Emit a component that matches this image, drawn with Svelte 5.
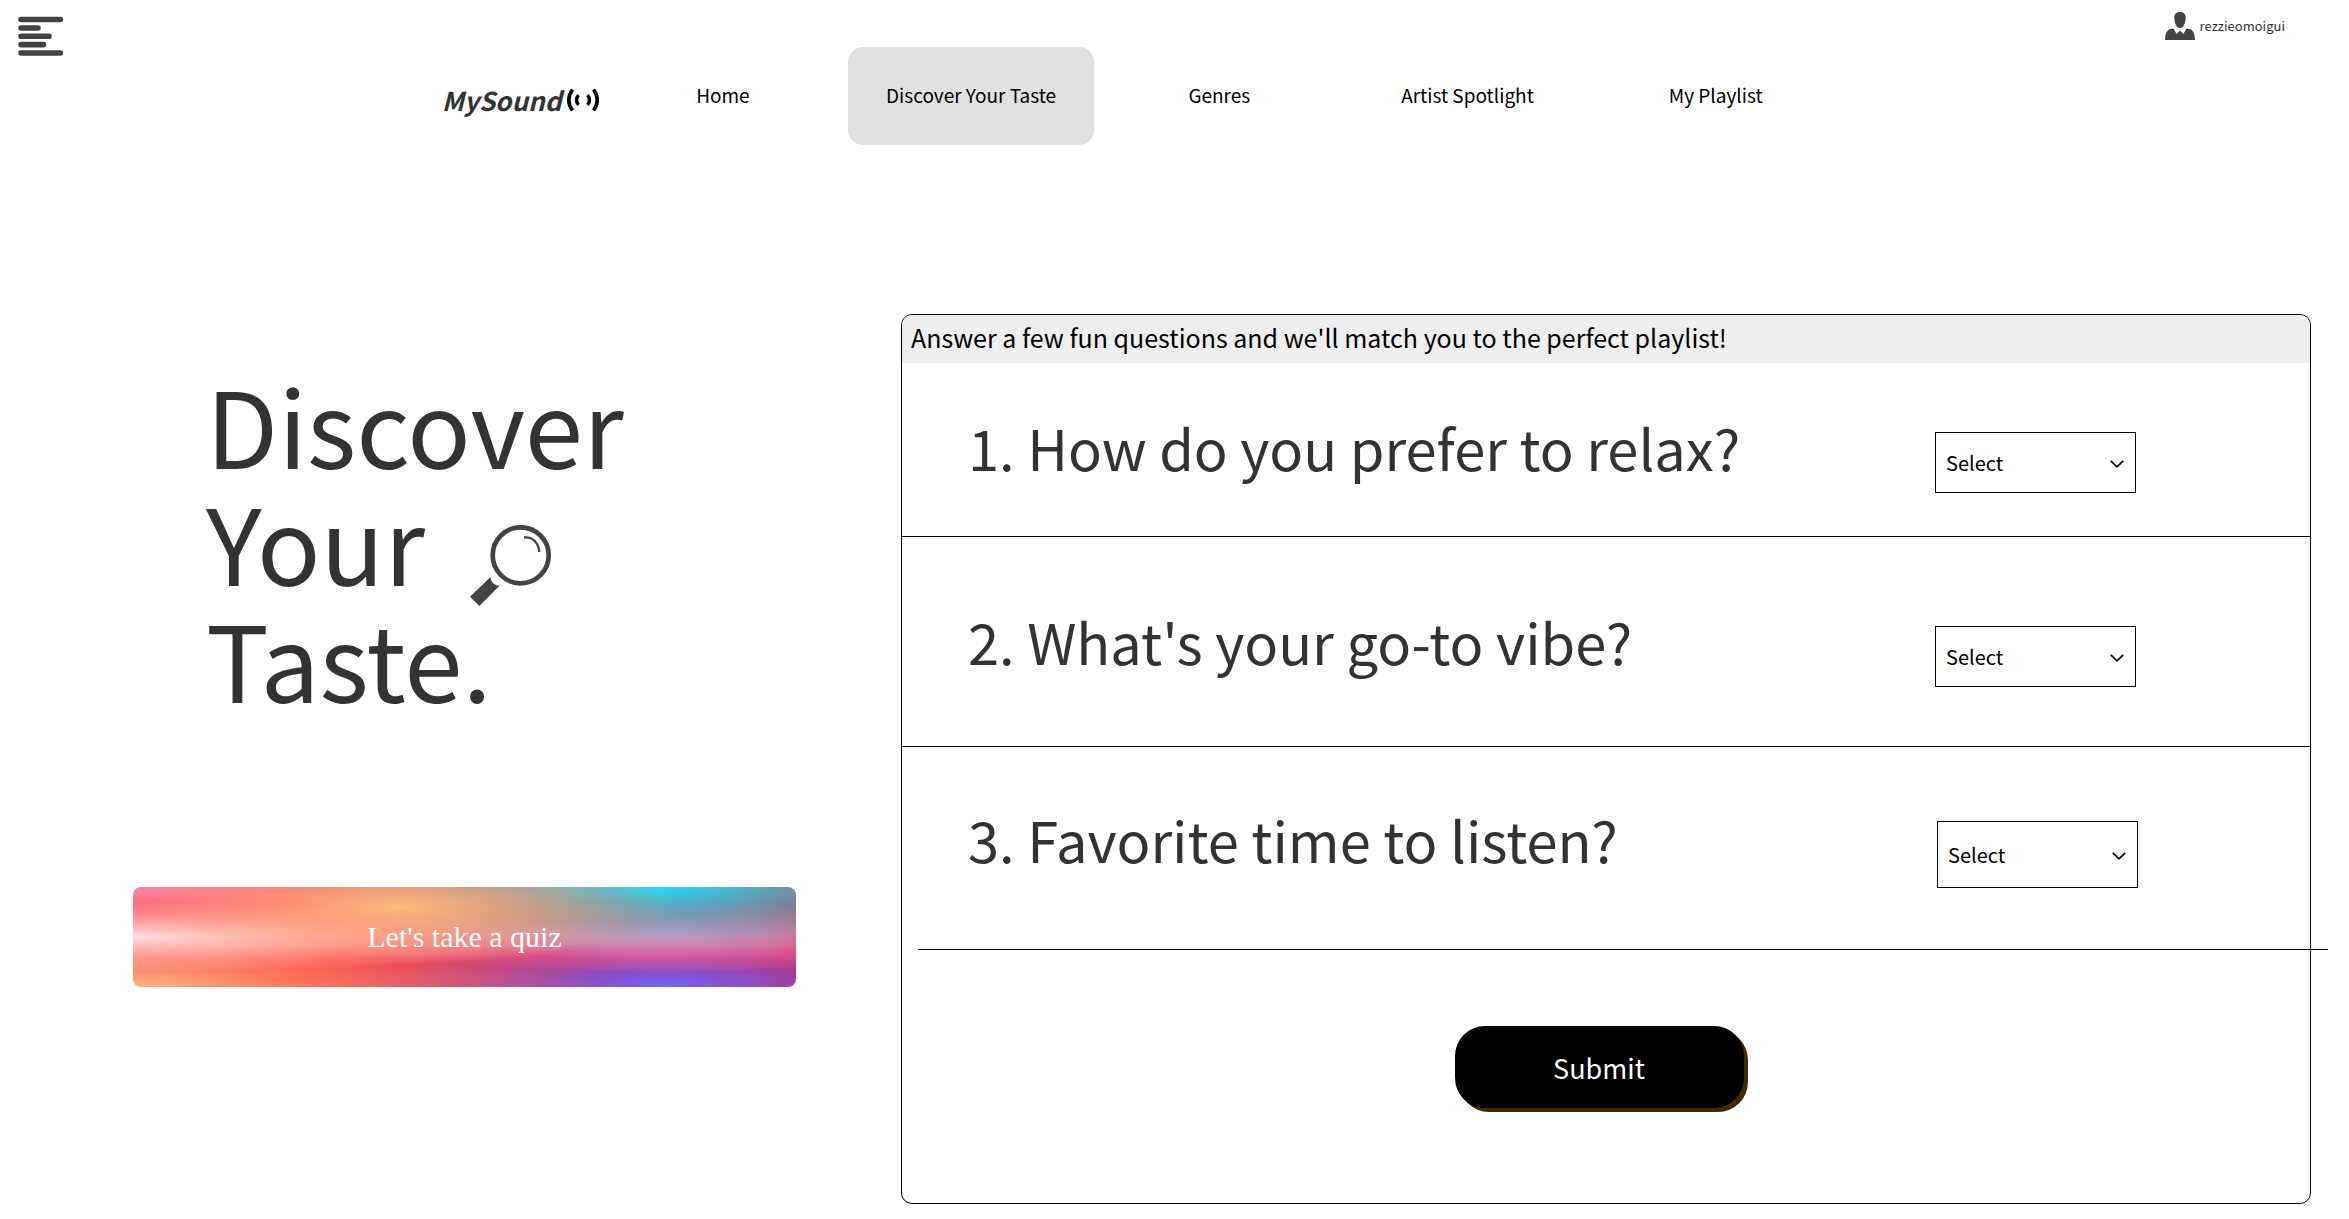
<script>
  const links = [
    { label: 'Home' },
    { label: 'Discover Your Taste', active: true },
    { label: 'Genres' },
    { label: 'Artist Spotlight' },
    { label: 'My Playlist' },
  ];

  const questions = [
    { id: 'relax', text: '1. How do you prefer to relax?', options: ['Reading', 'Walking', 'Napping'] },
    { id: 'vibe', text: "2. What's your go-to vibe?", options: ['Chill', 'Upbeat', 'Moody'] },
    { id: 'time', text: '3. Favorite time to listen?', options: ['Morning', 'Afternoon', 'Night'] },
  ];
</script>

<header>
  <button class="menu" aria-label="Open menu">
    <svg width="46" height="42" viewBox="0 0 46 42" fill="none" stroke="#434343" stroke-width="5.6" stroke-linecap="round">
      <path d="M3 4.5H42.4M3 13H20M3 21.3H31M3 29.6H25.500M3 38H42.400" />
    </svg>
  </button>

  <div class="bar">
    <a class="brand" href="#home">
      <span>MySound</span>
      <svg width="34" height="24" viewBox="0 0 34 24" fill="none" stroke="#000">
        <path d="M6.500 1.500Q-1 12 6.500 22.500M27.500 1.500Q35 12 27.500 22.500" stroke-width="3.6" />
        <path d="M12.500 7Q8.500 12 12.500 17M21.500 7Q25.500 12 21.500 17" stroke-width="3.4" />
      </svg>
    </a>
    <nav>
      {#each links as link}
        <a class:active={link.active} href="#{link.label.toLowerCase().replaceAll(' ', '-')}">{link.label}</a>
      {/each}
    </nav>
  </div>

  <a class="user" href="#profile">
    <svg width="30" height="28" viewBox="0 0 30 28" fill="#434343">
      <path d="M15 0C19 0 21 2.500 20.700 6.500C20.400 11 18.500 16 15 16S9.600 11 9.300 6.500C9 2.500 11 0 15 0Z" />
      <path d="M0 28C.3 22.500 1.500 18.500 4.500 17.300C6 16.700 7.600 17 8.500 16.500L11.600 22L15 18.500L18.400 22L21.500 16.500C22.400 17 24 16.700 25.500 17.300C28.500 18.500 29.700 22.500 30 28Z" />
    </svg>
    <span>rezzieomoigui</span>
  </a>
</header>

<main>
  <section class="intro">
    <h1>
      <span>Discover</span>
      <span class="with-icon">
        Your
        <svg width="82" height="82" viewBox="0 0 82 82" fill="none" stroke="#434343">
          <circle cx="50.700" cy="30.300" r="28" stroke-width="4.700" />
          <path d="M54 12.500C63 11.500 68.500 18 69.300 27" stroke-width="2.400" />
          <path fill="#434343" stroke="none" d="M20.500 52C21 57.500 24 60.500 29.500 60.700L9.300 81L0 71.700Z" />
        </svg>
      </span>
      <span>Taste.</span>
    </h1>
    <button class="quiz">Let's take a quiz</button>
  </section>

  <form class="panel">
    <p class="lead">Answer a few fun questions and we'll match you to the perfect playlist!</p>
    {#each questions as q}
      <div class="question {q.id}">
        <label for={q.id}>{q.text}</label>
        <div class="field">
          <select id={q.id}>
            <option>Select</option>
            {#each q.options as option}
              <option>{option}</option>
            {/each}
          </select>
          <svg width="14" height="8" viewBox="0 0 14 8" fill="none" stroke="#000" stroke-width="1.700">
            <path d="M.8 .8L7 6.800L13.200 .8" />
          </svg>
        </div>
      </div>
    {/each}
    <button class="submit" type="button">Submit</button>
  </form>
</main>

<style>
  :global(body) {
    margin: 0;
    background: #fff;
    color: #000;
    font-family: 'Noto Sans CJK SC', 'Open Sans', sans-serif;
    overflow-x: hidden;
  }

  a {
    color: inherit;
    text-decoration: none;
  }

  button,
  select {
    font-family: inherit;
    cursor: pointer;
  }

  svg {
    display: block;
    flex: none;
  }

  header {
    display: flex;
    align-items: flex-start;
    justify-content: space-between;
  }

  .menu {
    margin: 15px 0 0 18px;
    padding: 0;
    border: 0;
    background: none;
  }

  .bar {
    display: flex;
    flex: 0 1 1397px;
    margin: 47px 0 0 52px;
  }

  .brand {
    display: flex;
    flex: none;
    align-items: center;
    justify-content: space-between;
    width: 158px;
    padding-top: 8px;
    box-sizing: border-box;
    color: #333;
    font-size: 26px;
    line-height: 40px;
    font-weight: 700;
    font-style: italic;
  }

  nav {
    display: grid;
    grid-template-columns: repeat(5, 1fr);
    gap: 2px;
    flex: 1;
  }

  nav a {
    padding: 33px 0 35px;
    border-radius: 15px;
    text-align: center;
    font-size: 19px;
    line-height: 30px;
    white-space: nowrap;
  }

  nav a.active {
    background: #e0e0e0;
  }

  .user {
    display: flex;
    align-items: center;
    gap: 5px;
    margin: 12px 64px 0 0;
    color: #333;
    font-size: 13px;
    line-height: 28px;
  }

  main {
    display: grid;
    grid-template-columns: 663fr 1410fr;
    align-items: start;
    gap: 105px;
    padding: 169px 38px 15px 133px;
  }

  .intro {
    padding-top: 51px;
  }

  h1 {
    margin: 0 0 0 73px;
    color: #333;
    font-size: 105px;
    line-height: 117px;
    font-weight: 400;
  }

  h1 span {
    display: block;
  }

  h1 .with-icon {
    display: flex;
    align-items: flex-start;
    gap: 45px;
  }

  .with-icon svg {
    margin: 43px 0 -10px;
  }

  .quiz {
    width: 100%;
    height: 100px;
    margin-top: 171px;
    border: 0;
    border-radius: 8px;
    color: #fff;
    font-family: 'Liberation Serif', serif;
    font-size: 30px;
    background-color: #f00;
    background-image:
      radial-gradient(at 40% 20%, hsl(28, 100%, 74%) 0, transparent 50%),
      radial-gradient(at 80% 0%, hsl(189, 100%, 56%) 0, transparent 50%),
      radial-gradient(at 0% 50%, hsl(355, 100%, 93%) 0, transparent 50%),
      radial-gradient(at 80% 50%, hsl(340, 100%, 76%) 0, transparent 50%),
      radial-gradient(at 0% 100%, hsl(22, 100%, 77%) 0, transparent 50%),
      radial-gradient(at 80% 100%, hsl(242, 100%, 70%) 0, transparent 50%),
      radial-gradient(at 0% 0%, hsl(343, 100%, 76%) 0, transparent 50%);
  }

  .panel {
    display: flex;
    flex-direction: column;
    border: 1px solid #000;
    border-radius: 11px;
    padding-bottom: 95px;
  }

  .lead {
    margin: 0;
    padding: 2px 9px 6px;
    border-radius: 10px 10px 0 0;
    background: #eee;
    font-size: 25px;
    line-height: 40px;
  }

  .question {
    display: flex;
    align-items: flex-start;
    justify-content: space-between;
    box-sizing: border-box;
    padding: 0 174px 0 66px;
    border-bottom: 1px solid #000;
  }

  .question label {
    color: #333;
    font-size: 56px;
    line-height: 80px;
  }

  .relax {
    height: 174px;
    padding-top: 44px;
  }

  .vibe {
    height: 210px;
    padding-top: 64px;
  }

  .time {
    height: 203px;
    margin: 0 -18px 0 16px;
    padding: 52px 190px 0 50px;
  }

  .field {
    display: grid;
    align-items: center;
    flex: none;
    width: 201px;
    margin-top: 25px;
  }

  .time .field {
    margin-top: 22px;
  }

  .field > * {
    grid-area: 1 / 1;
  }

  .field svg {
    justify-self: end;
    margin: 2px 12px 0 0;
    pointer-events: none;
  }

  select {
    width: 100%;
    height: 61px;
    padding: 0 10px;
    border: 1px solid #000;
    border-radius: 0;
    background: #fff;
    color: #000;
    font-size: 20px;
    appearance: none;
  }

  .time select {
    height: 67px;
  }

  .submit {
    align-self: center;
    width: 289px;
    height: 82px;
    margin: 76px 14px 0 0;
    border: 0;
    border-radius: 30px;
    background: #000;
    box-shadow: 4px 4px 0 #432800;
    color: #fff;
    font-size: 27px;
  }
</style>
